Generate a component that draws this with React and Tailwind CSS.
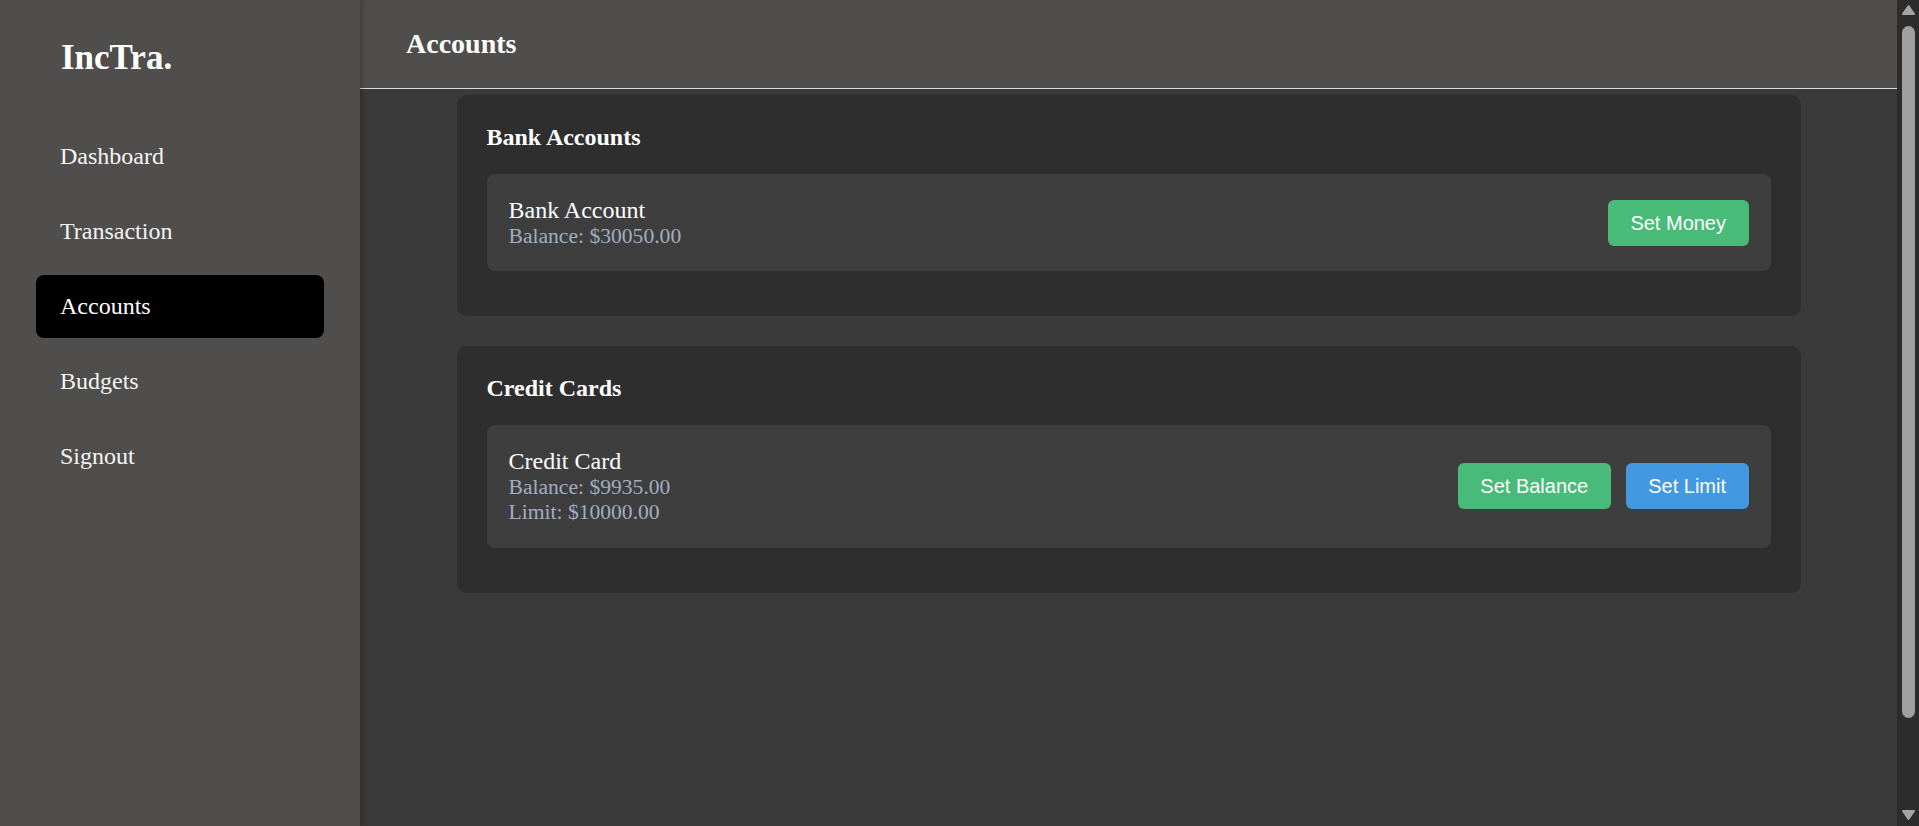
import React from 'react';

const navItems = ['Dashboard', 'Transaction', 'Accounts', 'Budgets', 'Signout'];

const Sidebar = ({ active }) => (
  <aside className="relative z-10 h-full w-[360px] shrink-0 bg-[#4f4e4c] text-[#f5f5f5] shadow-[2px_0_6px_rgba(0,0,0,0.25)]">
    <div className="pl-[61px] pt-[38px] text-[35px] font-bold leading-[40px] text-white">IncTra.</div>
    <nav className="mt-[47px] flex flex-col gap-[12px] px-[36px]">
      {navItems.map((item) => (
        <a
          key={item}
          href="#"
          className={`flex h-[63px] items-center rounded-[8px] pb-[2px] pl-[24px] text-[24px] leading-[28px] ${
            item === active ? 'bg-black text-white' : ''
          }`}
        >
          {item}
        </a>
      ))}
    </nav>
  </aside>
);

const Button = ({ color, children }) => (
  <button
    className={`rounded-[6px] px-[22.5px] py-[11px] font-['Liberation_Sans',Arial,sans-serif] text-[20px] leading-[24px] text-white ${
      color === 'blue' ? 'bg-[#4299e1]' : 'bg-[#48bb78]'
    }`}
  >
    {children}
  </button>
);

const AccountRow = ({ name, lines, children }) => (
  <div className="flex items-center justify-between rounded-[8px] bg-[#3e3e3e] px-[22px] py-[22.5px]">
    <div>
      <p className="text-[24px] leading-[27.6px] text-white">{name}</p>
      {lines.map((line) => (
        <p key={line} className="text-[21.6px] leading-[24.8px] text-[#a0aec0]">
          {line}
        </p>
      ))}
    </div>
    <div className="flex items-center gap-[15px]">{children}</div>
  </div>
);

const Section = ({ title, children }) => (
  <section className="w-[1344px] rounded-[10px] bg-[#2e2e2e] px-[30px] pb-[45px] pt-[28px]">
    <h2 className="mb-[23px] text-[24px] font-bold leading-[28px] text-white">{title}</h2>
    {children}
  </section>
);

// drawn page scrollbar (the headless page hides native ones)
const Scrollbar = () => (
  <div className="flex h-full w-[22px] shrink-0 flex-col items-center bg-[#2c2c2c]">
    <svg width="15" height="17" viewBox="0 0 15 17" className="shrink-0">
      <polygon points="7.5,7 13,15 2,15" fill="#a3a3a3" stroke="#a3a3a3" strokeWidth="2" strokeLinejoin="round" transform="translate(0,-1)" />
    </svg>
    <div className="mt-[9px] h-[692px] w-[13px] shrink-0 rounded-full bg-[#9f9f9f]" />
    <div className="flex-1" />
    <svg width="15" height="17" viewBox="0 0 15 17" className="mb-[5px] shrink-0">
      <polygon points="2,3 13,3 7.5,11" fill="#a3a3a3" stroke="#a3a3a3" strokeWidth="2" strokeLinejoin="round" transform="translate(0,4)" />
    </svg>
  </div>
);

export default function App() {
  return (
    <div className="flex h-screen overflow-hidden bg-[#3a3a3a] font-['Liberation_Serif','Times_New_Roman',serif]">
      <Sidebar active="Accounts" />
      <div className="flex-1 overflow-hidden">
        <header className="flex h-[89px] items-center border-b border-[#dcdcdc] bg-[#4f4e4c] pl-[46px]">
          <h1 className="text-[28px] font-bold leading-[32px] text-white">Accounts</h1>
        </header>
        <main className="flex flex-col items-center gap-[30px] pt-[6px]">
          <Section title="Bank Accounts">
            <AccountRow name="Bank Account" lines={['Balance: $30050.00']}>
              <Button>Set Money</Button>
            </AccountRow>
          </Section>
          <Section title="Credit Cards">
            <AccountRow name="Credit Card" lines={['Balance: $9935.00', 'Limit: $10000.00']}>
              <Button>Set Balance</Button>
              <Button color="blue">Set Limit</Button>
            </AccountRow>
          </Section>
        </main>
      </div>
      <Scrollbar />
    </div>
  );
}
